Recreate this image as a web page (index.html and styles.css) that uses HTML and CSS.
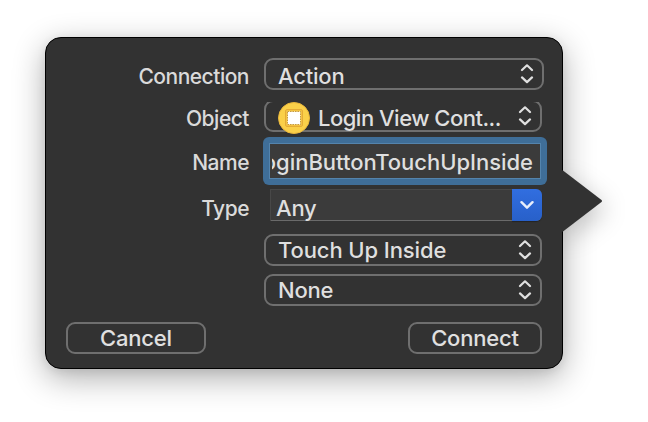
FILE: index.html
```html
<!DOCTYPE html>
<html lang="en">
<head>
<meta charset="utf-8">
<title>Connection</title>
<link rel="stylesheet" href="styles.css">
</head>
<body>
<svg class="symbols" width="0" height="0" aria-hidden="true">
  <symbol id="updown" viewBox="0 0 14 20"><path d="M2 6 7 1.3l5 4.7M2 13.4 7 18.1l5-4.7"/></symbol>
</svg>
<main class="popover">
  <svg class="arrow" width="42" height="64" viewBox="0 0 42 64"><path d="M0 1 2 1.5 40.5 31 Q41.5 32 40.5 33L2 62.5 0 63Z"/></svg>
  <div class="row connection">
    <label>Connection</label>
    <div class="popup wide"><span class="t-action">Action</span><svg class="chevrons"><use href="#updown"/></svg></div>
  </div>
  <div class="row object">
    <label class="l-object">Object</label>
    <div class="popup clipped">
      <svg class="controller" width="32" height="32" viewBox="0 0 32 32">
        <circle cx="16" cy="16" r="15.5" fill="#fad049" stroke="#e9b73d"/>
        <rect x="7.7" y="7.7" width="16.6" height="16.6" rx="1" fill="#f8ca45" stroke="#dfa334"/>
        <rect x="9.5" y="9.5" width="13" height="13" fill="#fff" stroke="#c59a43" stroke-dasharray="1.5 1"/>
      </svg>
      <span class="t-login">Login View Cont...</span><svg class="chevrons"><use href="#updown"/></svg>
    </div>
  </div>
  <div class="row name">
    <label class="l-name">Name</label>
    <div class="field"><div class="viewport"><div class="scroller"><span class="t-field">loginButtonTouchUpInside</span></div></div></div>
  </div>
  <div class="row type">
    <label class="l-type">Type</label>
    <div class="combo"><span class="t-any">Any</span><div class="drop"><svg width="14" height="10" viewBox="0 0 14 10"><path d="M1.5 2.2 7 7.7l5.5-5.5"/></svg></div></div>
  </div>
  <div class="row event"><div class="popup"><span class="t-touch">Touch Up Inside</span><svg class="chevrons"><use href="#updown"/></svg></div></div>
  <div class="row arguments"><div class="popup"><span class="t-none">None</span><svg class="chevrons"><use href="#updown"/></svg></div></div>
  <div class="actions"><button class="cancel">Cancel</button><button class="connect">Connect</button></div>
</main>
</body>
</html>
```

FILE: styles.css
```css
* { box-sizing: border-box; }
body { margin: 0; height: 422px; overflow: hidden; background: #fff; font: 500 22px/30px Inter, "Liberation Sans", sans-serif; letter-spacing: -.2px; color: #dfdfdf; }
.symbols { position: absolute; }
.popover { position: relative; width: 518px; height: 332px; margin: 37px 0 0 45px; padding: 20px; border: 1px solid #000; border-radius: 16px; background: #323232; box-shadow: 0 9px 32px rgba(0,0,0,.32), 0 2px 10px rgba(0,0,0,.08); display: flow-root; }
.arrow { position: absolute; left: 515px; top: 131px; fill: #323232; filter: drop-shadow(4px 8px 12px rgba(0,0,0,.22)); clip-path: inset(-30px -50px -40px 1px); }
.row { display: flex; height: 32px; padding-left: 198px; }
.row label { width: 183px; margin-left: -198px; margin-right: 15px; padding-top: 4px; text-align: right; flex: none; color: #dadada; white-space: nowrap; font-size: 21px; letter-spacing: -.5px; }
.row.object { height: 30px; margin-top: 12px; }
.row.name { height: 48px; margin-top: 5px; }
.row.type { margin-top: 4px; }
.row.event { margin-top: 13px; }
.row.arguments { margin-top: 8px; }
.row label.l-object { padding-top: 2px; }
.row label.l-name { padding-top: 11px; }
.row label.l-type { padding-top: 5px; }
.row label + * { flex: none; }
.popup { position: relative; display: flex; align-items: center; width: 278px; height: 32px; padding: 0 8px 0 12px; border: 2px solid #6f6f6f; border-radius: 9px; white-space: nowrap; }
.popup.wide { width: 280px; }
.popup.wide span { padding-top: 3px; }
.popup .t-touch { letter-spacing: -.1px; }
.popup.clipped { height: 32px; margin-top: -2px; clip-path: inset(2px 0 -4px 0); }
.popup .t-login { padding-top: 4px; letter-spacing: -.5px; }
.chevrons { width: 14px; height: 20px; margin: 0 0 0 auto; fill: none; stroke: #e0e0e0; stroke-width: 2.2; stroke-linecap: round; stroke-linejoin: round; }
.controller { flex: none; margin-right: 8px; margin-top: 4px; }
.field { width: 284px; height: 48px; margin-left: -1px; padding: 6px; border-radius: 6px; background: #3f6e98; }
.viewport { height: 36px; padding: 3px 7px 0 2px; border: 1px solid #5484ad; background: #3b3b3b; }
.scroller { display: flex; justify-content: flex-end; overflow: hidden; white-space: nowrap; letter-spacing: -.02px; }
.combo { display: flex; align-items: center; justify-content: space-between; width: 272px; height: 32px; margin-left: 6px; padding-left: 5px; border: 1px solid #484848; border-right: 0; border-bottom-color: #6a6a6a; background: #3b3b3b; }
.combo > span { padding-top: 6px; }
.drop { display: grid; place-items: center; width: 30px; height: 32px; border-radius: 0 6px 6px 0; background: linear-gradient(#316ee0, #2860c9); margin: -1px 0; box-shadow: 0 1px 1px rgba(0,0,0,.3); }
.combo { border-radius: 0 6px 6px 0; }
.drop svg { fill: none; stroke: #e8eefb; stroke-width: 2.4; stroke-linecap: round; stroke-linejoin: round; }
.actions { display: flex; justify-content: space-between; margin-top: 16px; }
button { height: 32px; padding: 1px 0 0; border: 2px solid #6f6f6f; border-radius: 9px; background: transparent; color: #e0e0e0; font: inherit; letter-spacing: inherit; line-height: 27px; }
.cancel { width: 140px; }
.connect { width: 134px; }
```
